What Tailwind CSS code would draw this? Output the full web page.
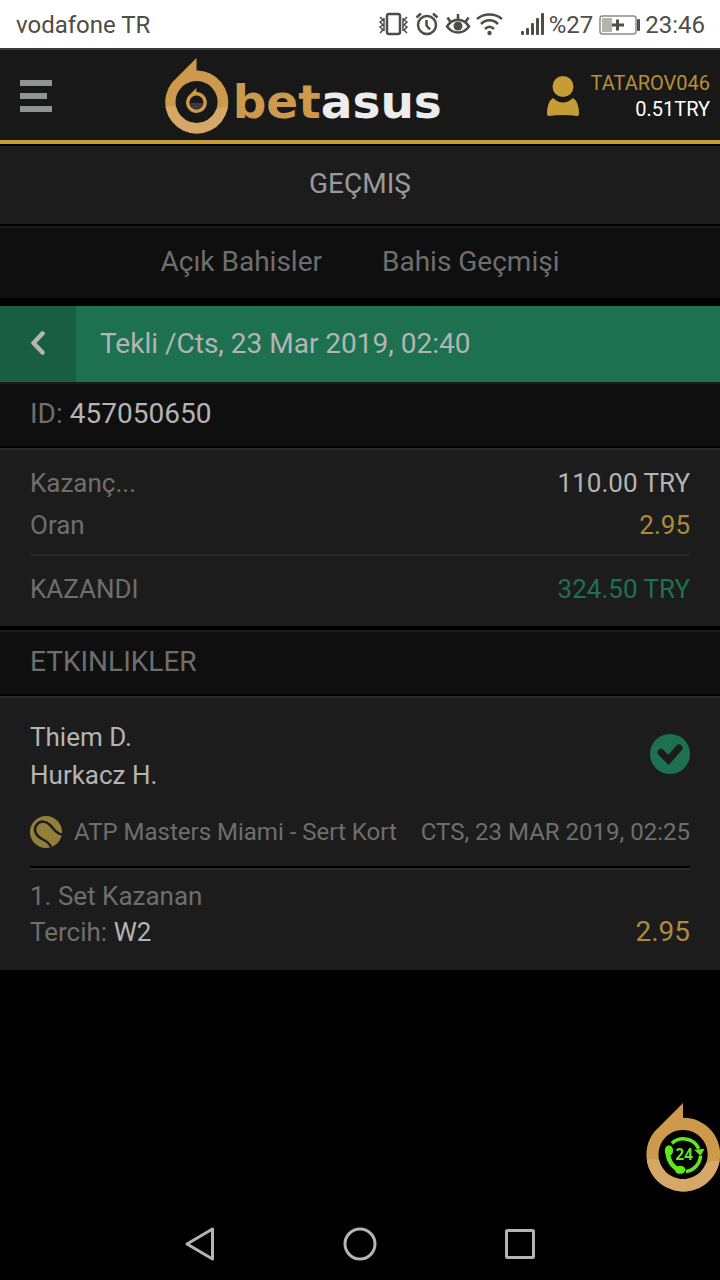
<!DOCTYPE html>
<html lang="tr">
<head>
    <meta charset="UTF-8">
    <meta name="viewport" content="width=device-width, initial-scale=1.0">
    <title>Betasus - Bahis Geçmişi</title>
    <script src="https://cdn.jsdelivr.net/npm/@tailwindcss/browser@4"></script>
</head>
<body class="bg-black font-[Roboto,sans-serif] text-[#6e6e6e] min-h-screen flex flex-col">

    <!-- phone status bar -->
    <div id="statusbar" class="h-[50px] bg-white border-b-2 border-[#3a3a3f] pt-0.5 pl-4 pr-[15px] flex items-center justify-between text-2xl text-[#4e4d46]">
        <span>vodafone TR</span>
        <div class="flex items-center">
            <svg class="w-[126px] h-8" viewBox="0 0 126 32" fill="none" stroke="#4e4d46" stroke-width="2.500">
                <!-- vibrate -->
                <rect x="8" y="5" width="13" height="20" rx="2"/>
                <path d="M1 8l3 3-3 2 3 3-3 2 3 3-3 3M5 9v13M28 8l-3 3 3 2-3 3 3 2-3 3 3 3M24 9v13" stroke-width="1.500"/>
                <!-- alarm -->
                <circle cx="48" cy="16" r="9"/>
                <path d="M47.500 11v5.500l3.500 4M37.500 8.500l4.500-4M58.500 8.500l-4.500-4"/>
                <!-- eye -->
                <path d="M68 17.500c6-9 16-9 22 0-6 8-16 8-22 0z"/>
                <circle cx="79" cy="17" r="4.500" fill="#4e4d46" stroke="none"/>
                <path d="M79 10V5M71.500 13l-3-4.500M86.500 13l3-4.500"/>
                <!-- wifi -->
                <path d="M98 10c7-6 18-6 25 0M102 15c5-5 12-5 17 0M106 20c3-3 6-3 9 0"/>
                <circle cx="110.500" cy="24" r="2.200" fill="#4e4d46" stroke="none"/>
            </svg>
            <svg class="w-6 h-8 ml-4" viewBox="0 0 24 32" fill="#4e4d46">
                <rect x="0" y="22" width="3" height="4" rx="1"/>
                <rect x="5" y="19" width="3" height="7" rx="1"/>
                <rect x="10" y="14" width="3" height="12" rx="1"/>
                <rect x="15" y="9" width="3" height="17" rx="1"/>
                <rect x="20" y="4" width="3" height="22" rx="1"/>
            </svg>
            <span class="ml-1">%27</span>
            <svg class="w-[42px] h-8 ml-1.5" viewBox="0 0 42 32">
                <rect x="1" y="7" width="36" height="18" rx="2.500" fill="none" stroke="#8d8c87" stroke-width="1.500"/>
                <rect x="3" y="9" width="10" height="14" fill="#b5b4b0"/>
                <path d="M17 10.500h3v4h5v3h-5v4h-3v-4h-4v-3h4z" fill="#4e4d46"/>
                <rect x="38" y="10" width="3" height="12" rx="1" fill="#4e4d46"/>
            </svg>
            <span class="ml-1">23:46</span>
        </div>
    </div>

    <header class="h-24 bg-[#181818] border-b-2 border-black">
        <div class="h-[94px] border-b-4 border-[#c69c35] pt-0.5 pl-5 pr-2.5 flex items-center justify-between">
            <button id="menu" aria-label="Menü" class="w-10">
                <svg class="w-8 h-8" viewBox="0 0 32 32" fill="#8e9492">
                    <path d="M0 0h32v6H0zM0 13h27v6H0zM0 26h32v6H0z"/>
                </svg>
            </button>

            <a href="#" id="logo" class="flex items-center">
                <svg class="w-16 h-[76px]" viewBox="0 0 64 76">
                    <defs>
                        <clipPath id="lower"><path d="M0 49c8-3 14 1 24 5s28-5 40-5v27H0z"/></clipPath>
                        <path id="drop" fill-rule="evenodd" d="M31.500 0V12.500A31.500 31.500 0 1 1 7 24.500zM31.500 23a21 21 0 1 0 .1 0z"/>
                    </defs>
                    <use href="#drop" fill="#cd994c"/>
                    <use href="#drop" fill="#d6a868" clip-path="url(#lower)"/>
                    <path d="M25.500 45h12a6 6 0 0 1-12 0z" fill="#3c3c40"/>
                    <use href="#drop" fill="#cd994c" transform="translate(21 30) scale(.33)"/>
                </svg>
                <span class="pt-3 pl-1 font-[DejaVu_Sans,sans-serif] font-bold text-[47px] leading-[60px] text-[#cd994c]">bet<span class="text-[#ececec]">asus</span></span>
            </a>

            <a href="#" id="user" class="flex items-center gap-3">
                <svg class="w-8 h-10" viewBox="0 0 32 40" fill="#c69c35">
                    <circle cx="16" cy="10.500" r="10.500"/>
                    <path d="M6 22q10 9 20 0q6 4 6 16q0 2-2 2q-14-2-28 0q-2 0-2-2q0-12 6-16z"/>
                </svg>
                <span class="flex flex-col items-end text-xl leading-[26px] text-white">
                    <span class="text-[#b98f35]">TATAROV046</span>
                    <span>0.51TRY</span>
                </span>
            </a>
        </div>
    </header>

    <main class="flex-1">
        <h1 class="h-20 bg-[#1c1c1c] border-b-2 border-black flex items-center justify-center pb-0.5 text-[28px] text-[#9a9a9a]">GEÇMIŞ</h1>

        <nav class="h-[72px] bg-[#0f0f0f] border-t-2 border-[#1c1c1c] pb-0.5 flex items-center justify-center gap-[60px] text-[28px]">
            <a href="#">Açık Bahisler</a>
            <a href="#">Bahis Geçmişi</a>
        </nav>

        <section id="bet" class="mt-2">
            <div class="h-[76px] bg-[#1d7151] flex items-center text-[28px] text-[#b4b4b4]">
                <button aria-label="Geri" class="w-[76px] h-full bg-[#195e44] pb-0.5 flex items-center justify-center">
                    <svg class="w-4 h-6" viewBox="0 0 16 24" fill="none" stroke="#b4b4b4" stroke-width="4.500" stroke-linecap="round" stroke-linejoin="round">
                        <path d="M12.500 2.500L3.500 12l9 9.500"/>
                    </svg>
                </button>
                <h2 class="ml-6">Tekli /Cts, 23 Mar 2019, 02:40</h2>
            </div>

            <p class="h-[66px] bg-[#0f0f0f] border-t-2 border-t-[#1c1c1c] border-b-2 border-b-black px-[30px] pb-0.5 flex items-center gap-[7px] text-[28px]">
                ID: <span class="text-[#b4b4b4]">457050650</span>
            </p>

            <dl class="bg-[#1c1c1c] border-t-2 border-[#2a2a2a] px-[30px] pt-3 text-[26px] leading-[42px]">
                <div class="flex justify-between">
                    <dt>Kazanç...</dt>
                    <dd class="text-[#b4b4b4]">110.00 TRY</dd>
                </div>
                <div class="flex justify-between">
                    <dt>Oran</dt>
                    <dd class="text-[#b08a3c]">2.95</dd>
                </div>
                <div class="mt-2 h-[72px] border-t-2 border-[#292929] pt-3 flex justify-between">
                    <dt>KAZANDI</dt>
                    <dd class="text-[#1d7151]">324.50 TRY</dd>
                </div>
            </dl>
        </section>

        <section id="events" class="mt-1">
            <h2 class="h-[66px] bg-[#0f0f0f] border-t-2 border-t-[#1c1c1c] border-b-2 border-b-black px-[30px] pb-0.5 flex items-center text-[28px]">ETKINLIKLER</h2>

            <div class="bg-[#1c1c1c] border-t-2 border-[#2a2a2a] px-[30px] pt-5 pb-5">
                <div class="flex items-start justify-between text-[26px] leading-[38px] text-[#b4b4b4]">
                    <div>
                        <p>Thiem D.</p>
                        <p>Hurkacz H.</p>
                    </div>
                    <svg class="w-10 h-10 mt-4" viewBox="0 0 40 40">
                        <circle cx="20" cy="20" r="20" fill="#1d7151"/>
                        <path d="M11 18.500l7.500 7.500L29 14" fill="none" stroke="#1c1c1c" stroke-width="7" stroke-linejoin="miter" stroke-linecap="round"/>
                    </svg>
                </div>

                <div class="mt-[22px] h-[50px] flex items-start justify-between text-2xl leading-8">
                    <div class="flex gap-3">
                        <!-- tennis ball -->
                        <svg class="w-8 h-8" viewBox="0 0 32 32">
                            <circle cx="16" cy="16" r="16" fill="#92803a"/>
                            <path d="M32 18.500C26 18 24 13 20 9S10 4 6.500 9s-.5 11 5.500 14 8 5 9 8" fill="none" stroke="#1c1c1c" stroke-width="2.500"/>
                        </svg>
                        <span>ATP Masters Miami - Sert Kort</span>
                    </div>
                    <span>CTS, 23 MAR 2019, 02:25</span>
                </div>

                <div class="border-t-2 border-black">
                    <div class="border-t-2 border-[#2a2a2a] pt-2 text-[26px] leading-[36px]">
                        <p>1. Set Kazanan</p>
                        <div class="flex justify-between">
                            <p>Tercih: <span class="text-[#b4b4b4]">W2</span></p>
                            <span class="text-[28px] text-[#b08a3c]">2.95</span>
                        </div>
                    </div>
                </div>
            </div>
        </section>
    </main>

    <!-- live support -->
    <button id="support" aria-label="Canlı destek" class="fixed right-0 bottom-[88px]">
        <svg class="w-[74px] h-[89px]" viewBox="0 0 63 76">
            <use href="#drop" fill="#cd994c"/>
            <use href="#drop" fill="#d6a868" clip-path="url(#lower)"/>
            <g fill="none" stroke="#5cea1c" stroke-width="3">
                <path d="M22 34.500a14.500 14.500 0 0 1 23 4.500M46.500 45a14.500 14.500 0 0 1-12.500 13.500"/>
                <path d="M18.500 41c0 8 4 14 10.500 16.500" stroke-width="4"/>
            </g>
            <path d="M41 40l9-1-3.500 6z" fill="#5cea1c"/>
            <ellipse cx="19.500" cy="40.500" rx="3.500" ry="4.500" fill="#5cea1c"/>
            <ellipse cx="29" cy="57" rx="4.500" ry="3.500" fill="#5cea1c"/>
            <text x="32.500" y="49" text-anchor="middle" font-family="Open Sans, sans-serif" font-size="13" font-weight="700" fill="#5cea1c">24</text>
        </svg>
    </button>

    <!-- android buttons -->
    <nav class="h-[72px] flex items-center justify-center gap-[120px]">
        <button aria-label="Geri">
            <svg class="w-10 h-10" viewBox="0 0 40 40" fill="none" stroke="#b4b4b4" stroke-width="3" stroke-linejoin="round"><path d="M32.500 5v30L7 20z"/></svg>
        </button>
        <button aria-label="Ana ekran">
            <svg class="w-10 h-10" viewBox="0 0 40 40" fill="none" stroke="#b4b4b4" stroke-width="3"><circle cx="20" cy="20" r="15"/></svg>
        </button>
        <button aria-label="Son uygulamalar">
            <svg class="w-10 h-10" viewBox="0 0 40 40" fill="none" stroke="#b4b4b4" stroke-width="3" stroke-linejoin="round"><rect x="6.500" y="6.500" width="27" height="27" rx="1"/></svg>
        </button>
    </nav>

</body>
</html>
